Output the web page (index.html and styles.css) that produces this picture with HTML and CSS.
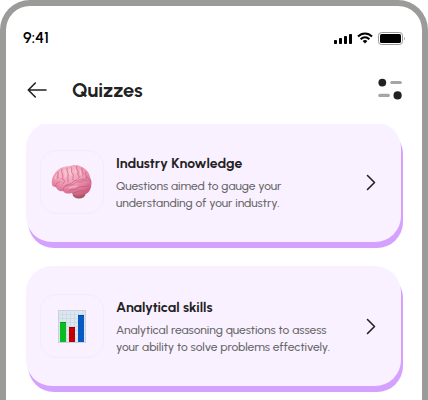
FILE: index.html
```html
<!DOCTYPE html>
<html lang="en">
<head>
<meta charset="utf-8">
<meta name="viewport" content="width=device-width, initial-scale=1">
<title>Quizzes</title>
<link rel="stylesheet" href="styles.css">
</head>
<body>
<div class="phone">
  <div class="status">
    <time class="clock">9:41</time>
    <div class="indicators">
      <svg width="18" height="12" viewBox="0 0 18 12" aria-hidden="true"><rect x="0" y="8" width="3" height="4" rx=".8"/><rect x="5" y="6" width="3" height="6" rx=".8"/><rect x="10" y="4" width="3" height="8" rx=".8"/><rect x="15" y="2" width="3" height="10" rx=".8"/></svg>
      <svg width="16" height="12" viewBox="0 0 16 12" aria-hidden="true"><g fill="none" stroke="#000" stroke-width="2"><path d="M1 4.5C5 .4 11 .4 15 4.5M3.6 7.2c2.6-2.5 6.2-2.5 8.8 0"/></g><path d="M5.6 9q2.4-1.8 4.8 0L8 11.6z"/></svg>
      <svg width="27" height="13" viewBox="0 0 27 13" aria-hidden="true"><rect x=".5" y=".5" width="24" height="12" rx="3" fill="none" stroke="#999"/><rect x="2" y="2" width="21" height="9" rx="1.6"/><path d="M26 4.5q1.4 2 0 4z" fill="#999"/></svg>
    </div>
  </div>
  <header class="topbar">
    <button class="icon-button" type="button" aria-label="Back">
      <svg width="20" height="16" viewBox="0 0 20 16"><path d="M19 8H1.500M8.300 1 1.300 8l7 7" fill="none" stroke="#222" stroke-width="1.600" stroke-linecap="round" stroke-linejoin="round"/></svg>
    </button>
    <h1 class="title">Quizzes</h1>
    <button class="icon-button" type="button" aria-label="Filters">
      <svg width="24" height="22" viewBox="0 0 24 22"><circle cx="4.300" cy="3.500" r="3.900" fill="#222" transform="translate(0 .1)"/><circle cx="19.600" cy="16.400" r="4.100" fill="#222"/><path d="M13.800 3.500h8.500M1.800 16.400h8.500" stroke="#a6a6a6" stroke-width="3.200" stroke-linecap="round"/></svg>
    </button>
  </header>
  <main class="list">
    <a class="card" href="#industry">
      <span class="thumb">
        <svg width="42" height="36" viewBox="0 0 42 36" aria-hidden="true">
          <defs><radialGradient id="pink" cx=".42" cy=".25" r=".8"><stop offset="0" stop-color="#f9c0cf"/><stop offset=".5" stop-color="#ee98b1"/><stop offset="1" stop-color="#cc5a80"/></radialGradient>
          <radialGradient id="stem" cx=".4" cy=".3" r=".8"><stop offset="0" stop-color="#d4797f"/><stop offset="1" stop-color="#944b55"/></radialGradient></defs>
          <ellipse cx="28" cy="30" rx="6.500" ry="4.500" fill="url(#stem)"/>
          <path d="M1 20C0 15 3 9 7 6 10 3 15 2 19 2c4-2 9-1 12 1 4 2 7 5 8 10 2 4 2 9 0 13-2 4-6 5-9 5-3 1-7 0-9-2-3 1-7 1-9-2-3 1-6-1-7-4-3 0-4-1-4-3z" fill="url(#pink)"/>
          <g fill="none" stroke="#bd5478" stroke-width=".8" stroke-linecap="round" opacity=".75"><path d="M5 23c-1-3 1-5 4-5M7 8c1 2-1 4 0 6M11 5c-2 4 3 6 0 10 3 0 3 3 1 5M16 4c-1 4 2 4 1 8-1 3 1 4 0 6M20 3c2 2-1 5 2 7 1 2-1 4 0 6M26 2c-2 3 2 4 1 7-1 2 2 3 1 5M31 4c-1 3 2 4 1 7M35 8c-2 2 2 4 0 7M12 26c0-4 4-5 8-5 3 0 4-4 8-3 3 1 5-3 8-2M14 22c4-3 6-1 9-5 4-2 6 0 10-2M18 27c3-3 6 0 9-3 4-3 7 0 11-3M22 29c5-1 6-3 10-2 3 0 5-2 7-4M36 13c1 2 3 2 4 5"/></g>
          <g fill="none" stroke="#ffd5df" stroke-width="1" stroke-linecap="round" opacity=".7"><path d="M9 8c0 2-1 3 0 5M14 6c0 3 1 4 0 7M19 6c0 2 0 3 1 5M24 5l1 4M29 6l1 5M18 24c3-2 5 0 8-2M4 15c0-2 1-3 2-4"/></g>
        </svg>
      </span>
      <span class="copy"><strong class="name">Industry Knowledge</strong><span class="desc">Questions aimed to gauge your<br>understanding of your industry.</span></span>
      <svg class="chevron" width="10" height="17" viewBox="0 0 10 17" aria-hidden="true"><path d="m1.500 1.500 7 7-7 7" fill="none" stroke="#222" stroke-width="1.600" stroke-linecap="round" stroke-linejoin="round"/></svg>
    </a>
    <a class="card" href="#analytical">
      <span class="thumb">
        <svg width="28" height="33" viewBox="0 0 28 33" aria-hidden="true">
          <rect width="28" height="33" fill="#c9d1da"/><rect x="1" y="1" width="26" height="31" fill="#dce7ef"/>
          <path d="M4.500 1v31M8.500 1v31M12.500 1v31M16.500 1v31M20.500 1v31M24.500 1v31M1 4.500h26M1 8.500h26M1 12.500h26M1 16.500h26M1 20.500h26M1 24.500h26M1 28.500h26" stroke="#c5d5e2" stroke-width=".6"/>
          <path d="M2 12h6v20H2z" fill="#09bd20"/><path d="M11 17h6v15h-6z" fill="#c00006"/><path d="M20 5h6v27h-6z" fill="#0759c4"/>
          <path d="M2 12h6v1H2z" fill="#08951b"/><path d="M11 17h6v1h-6z" fill="#930006"/><path d="M20 5h6v1h-6z" fill="#06439a"/>
        </svg>
      </span>
      <span class="copy"><strong class="name">Analytical skills</strong><span class="desc">Analytical reasoning questions to assess<br>your ability to solve problems effectively.</span></span>
      <svg class="chevron" width="10" height="17" viewBox="0 0 10 17" aria-hidden="true"><path d="m1.500 1.500 7 7-7 7" fill="none" stroke="#222" stroke-width="1.600" stroke-linecap="round" stroke-linejoin="round"/></svg>
    </a>
  </main>
</div>
</body>
</html>
```
FILE: styles.css
```css
* { box-sizing: border-box; }
html { background: #fff; }
body {
  margin: 0;
  font-family: Urbanist, Lato, "Open Sans", sans-serif;
  color: #222;
}
svg { display: block; flex: none; overflow: visible; }
.phone {
  min-height: 100vh;
  border: 6px solid #9b9b9a;
  border-bottom: 0;
  border-radius: 30px 30px 0 0;
  background: #fff;
}
.status {
  display: flex;
  align-items: center;
  justify-content: space-between;
  height: 64px;
  padding: 0 17px;
}
.clock {
  font-size: 16px;
  line-height: 20px;
  font-weight: 600;
  color: #000;
}
.indicators { display: flex; align-items: center; gap: 5px; }
.topbar {
  display: flex;
  align-items: center;
  height: 40px;
  padding: 0 20px 0 21px;
}
.title {
  flex: 1;
  margin: 0 0 0 25px;
  font-size: 20px;
  line-height: 24px;
  font-weight: 700;
}
.icon-button {
  padding: 0;
  border: 0;
  background: none;
  cursor: pointer;
}
.list {
  display: flex;
  flex-direction: column;
  gap: 24px;
  margin-top: 14px;
  padding: 0 19px 8px 20px;
  overflow: hidden;
}
.card {
  display: flex;
  align-items: center;
  margin-right: 2px;
  padding: 28px 25px 28px 14px;
  border-radius: 26px;
  background: #f9f1ff;
  box-shadow: 2px 6px 0 #d5a1ff;
  color: inherit;
  text-decoration: none;
}
.card:first-child { margin-top: -2px; }
.thumb {
  display: flex;
  flex: none;
  align-items: center;
  justify-content: center;
  width: 64px;
  height: 64px;
  border: 1px solid #f0eef0;
  border-radius: 16px;
}
.copy {
  display: flex;
  flex: 1;
  flex-direction: column;
  gap: 2px;
  margin-left: 12px;
}
.name { font-size: 14px; line-height: 24px; font-weight: 700; }
.desc { font-size: 12px; line-height: 17px; font-weight: 500; color: #666; white-space: nowrap; }
```
